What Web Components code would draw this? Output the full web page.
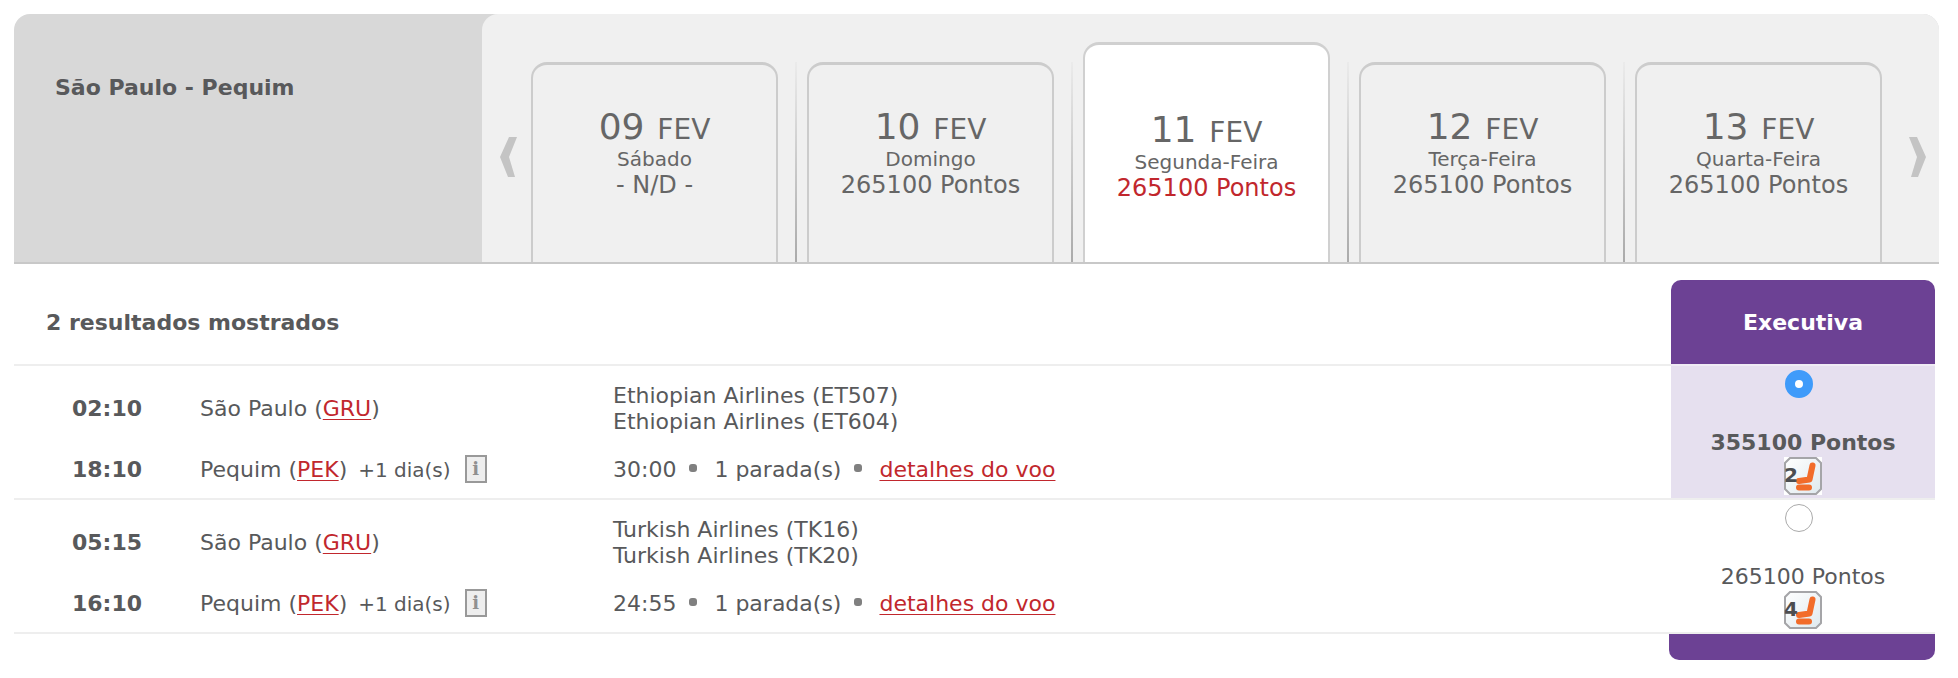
<!DOCTYPE html>
<html lang="pt-BR">
<head>
<meta charset="utf-8">
<title>São Paulo - Pequim</title>
<style>
  body { margin: 0; background: #fff; color: #58595b; font: 22px/26px Verdana, "DejaVu Sans", sans-serif; }
</style>
</head>
<body>
<flight-page></flight-page>
<script>
const define = (name, html, setup) => {
  const tpl = document.createElement('template');
  tpl.innerHTML = html;
  customElements.define(name, class extends HTMLElement {
    constructor() {
      super();
      this.attachShadow({ mode: 'open' }).append(tpl.content.cloneNode(true));
    }
    connectedCallback() { if (setup) setup(this, this.shadowRoot); }
  });
};

define('strip-arrow', `
<style>
  :host { display: flex; }
  button { flex: 1; border: 0; padding: 0; margin: 0; background: none; cursor: pointer; display: flex; align-items: flex-start; padding-top: 122px; justify-content: center; }
  svg { display: block; width: 18px; height: 42px; }
  :host([direction="next"]) svg { transform: scaleX(-1); }
</style>
<button type="button"><svg viewBox="0 0 18 42" aria-hidden="true"><path d="M10 1H18L10 21L16 41H9L1 21Z" fill="#c4c4c4"/></svg></button>`,
(host, root) => root.querySelector('button').setAttribute('aria-label', host.getAttribute('label')));

define('date-tab', `
<style>
  :host { display: flex; position: relative; flex: 1 1 0; min-width: 0; margin-top: 48px; }
  button { flex: 1; min-width: 0; margin: 0; padding: 45px 0 0; border: 2px solid #ccc; border-top-width: 3px; border-bottom: 0; border-radius: 16px 16px 0 0; background: #f0f0f0; color: #666; font: inherit; display: flex; flex-direction: column; align-items: center; cursor: pointer; }
  .date { font-size: 28px; line-height: 34px; white-space: pre; }
  .number { font-size: 36px; margin-right: 4px; }
  .day { font-size: 20px; line-height: 24px; }
  .price { font-size: 24px; line-height: 28px; }
  :host([divided])::before { content: ""; position: absolute; left: -12px; top: 0; bottom: 0; width: 2px; background: linear-gradient(#ebebeb, #aaa); }
  :host([active]) { margin-top: 28px; }
  :host([active]) button { background: #fff; padding-top: 68px; border-color: #d0d0d0; }
  :host([active])::before { top: 20px; }
  :host([active]) .price { color: #c1272d; }
</style>
<button type="button"><span class="date"><span class="number"></span> FEV</span><span class="day"></span><span class="price"><slot></slot></span></button>`,
(host, root) => {
  root.querySelector('.number').textContent = host.getAttribute('number');
  root.querySelector('.day').textContent = host.getAttribute('day');
  if (host.hasAttribute('active')) root.querySelector('button').setAttribute('aria-current', 'date');
});

define('date-strip', `
<style>
  :host { display: flex; height: 250px; box-sizing: border-box; border-bottom: 2px solid #c8c8c8; border-radius: 16px 16px 0 0; background: #d8d8d8; }
  h1 { flex: 0 0 468px; box-sizing: border-box; margin: 0; padding: 61px 0 0 41px; font-size: 22px; line-height: 26px; }
  nav { flex: 1; display: flex; background: #f0f0f0; border-radius: 16px 16px 0 0; }
  .tabs { flex: 1; display: flex; gap: 29px; }
  [direction="prev"] { width: 49px; padding-left: 2px; box-sizing: border-box; }
  [direction="next"] { width: 57px; padding-left: 14px; box-sizing: border-box; }
</style>
<h1><slot name="route"></slot></h1>
<nav aria-label="Datas">
  <strip-arrow direction="prev" label="Datas anteriores"></strip-arrow>
  <div class="tabs"><slot></slot></div>
  <strip-arrow direction="next" label="Próximas datas"></strip-arrow>
</nav>`);

define('info-button', `
<style>
  :host { display: inline-block; vertical-align: middle; }
  button { display: block; box-sizing: border-box; width: 22px; height: 28px; margin: 0; padding: 0; border: 2px solid #999; background: #eee; color: #909090; font: bold 18px/22px "DejaVu Serif", serif; text-align: center; cursor: pointer; }
</style>
<button type="button">i</button>`);

define('seat-count', `
<style>
  :host { display: block; position: relative; width: 38px; height: 38px; margin: 0 auto; background: #fff; text-align: left; font: bold 20px/24px Verdana, "DejaVu Sans", sans-serif; color: #4c4d50; }
  svg { display: block; width: 38px; height: 38px; }
  span { position: absolute; left: 0; top: 6px; }
</style>
<svg viewBox="0 0 38 38" aria-hidden="true">
  <defs><linearGradient id="g" x1="0" y1="0" x2="1" y2="1"><stop offset="0" stop-color="#fff"/><stop offset="1" stop-color="#dfe9ee"/></linearGradient></defs>
  <path d="M6 1H32L37 6V32L32 37H6L1 32V6Z" fill="url(#g)" stroke="#a5a5a8" stroke-width="2"/>
  <path d="M28.500 8.500L25.500 22.500L15 24" fill="none" stroke="#f26c2a" stroke-width="6" stroke-linecap="round" stroke-linejoin="round"/>
  <path d="M15 30.500H25" stroke="#f26c2a" stroke-width="6" stroke-linecap="round"/>
</svg>
<span><slot></slot></span>`);

define('stop-dot', `
<style>:host { display: inline-block; width: 8px; height: 8px; margin: 0 17px 0 13px; border-radius: 3px; background: #808080; vertical-align: 5px; }</style>`);

const flight = (id, f, checked) => `
<tbody class="${checked ? 'chosen' : ''}">
  <tr class="out">
    <th scope="row">${f.dep}</th>
    <td>São Paulo (<a href="#GRU">GRU</a>)</td>
    <td>${f.legs.join('<br>')}</td>
    <td class="fare" rowspan="2">
      <input type="radio" name="fare" id="${id}" ${checked ? 'checked' : ''}>
      <label for="${id}">${f.price} Pontos</label>
      <seat-count>${f.seats}</seat-count>
    </td>
  </tr>
  <tr class="in">
    <th scope="row">${f.arr}</th>
    <td>Pequim (<a href="#PEK">PEK</a>) <small>+1 dia(s)</small><info-button></info-button></td>
    <td>${f.time}<stop-dot></stop-dot>1 parada(s)<stop-dot></stop-dot><a href="#${id}">detalhes do voo</a></td>
  </tr>
</tbody>`;

define('flight-results', `
<style>
  :host { display: block; padding-top: 16px; }
  table { width: 100%; table-layout: fixed; border-collapse: separate; border-spacing: 0; }
  .time { width: 186px; } .city { width: 413px; } .cabin { width: 264px; }
  th, td { padding: 0; text-align: left; font-size: 22px; line-height: 26px; vertical-align: top; }
  thead th { height: 82px; padding-top: 2px; vertical-align: middle; border-bottom: 2px solid #eee; }
  thead th:first-child { padding-left: 32px; }
  thead .cabin-name { background: #6c4194; background-clip: padding-box; border-radius: 10px 10px 0 0; border-color: #efebf4; color: #fff; text-align: center; }
  .out th, .out td { height: 60px; padding-top: 13px; padding-bottom: 3px; vertical-align: middle; }
  tbody th { padding-left: 58px; }
  .in th, .in td { height: 41px; padding-top: 15px; border-bottom: 2px solid #eee; }
  tbody td.fare { box-sizing: border-box; height: 134px; padding: 4px 0 0; vertical-align: top; text-align: center; border-bottom: 2px solid #eee; }
  .chosen .fare { background: #e6e0ef; font-weight: bold; }
  a { color: #c1272d; text-decoration-thickness: 1px; text-underline-offset: 3px; text-decoration-skip-ink: none; }
  small { margin-left: 4px; font-size: 20px; }
  info-button { margin: -4px 0 0 14px; }
  input { appearance: none; box-sizing: border-box; display: block; width: 28px; height: 28px; margin: 0 auto; border: 1px solid #aaa; border-radius: 50%; background: #fff; transform: translateX(-4px); }
  input:checked { border: 10px solid #3f9bfa; }
  label { display: block; padding: 32px 0 1px; }
  .foot { width: 266px; height: 26px; margin-left: auto; border-radius: 0 0 10px 10px; background: #6c4194; }
</style>
<table>
  <colgroup><col class="time"><col class="city"><col><col class="cabin"></colgroup>
  <thead><tr><th colspan="3">2 resultados mostrados</th><th class="cabin-name" scope="col">Executiva</th></tr></thead>
  ${flight('voo-1', { dep: '02:10', arr: '18:10', legs: ['Ethiopian Airlines (ET507)', 'Ethiopian Airlines (ET604)'], time: '30:00', price: '355100', seats: 2 }, true)}
  ${flight('voo-2', { dep: '05:15', arr: '16:10', legs: ['Turkish Airlines (TK16)', 'Turkish Airlines (TK20)'], time: '24:55', price: '265100', seats: 4 }, false)}
</table>
<div class="foot"></div>`);

define('flight-page', `
<style>
  :host { display: block; padding: 14px 19px 18px 14px; }
  flight-results { margin-right: 4px; }
</style>
<date-strip>
  <span slot="route">São Paulo - Pequim</span>
  <date-tab number="09" day="Sábado">- N/D -</date-tab>
  <date-tab divided number="10" day="Domingo">265100 Pontos</date-tab>
  <date-tab divided number="11" day="Segunda-Feira" active>265100 Pontos</date-tab>
  <date-tab divided number="12" day="Terça-Feira">265100 Pontos</date-tab>
  <date-tab divided number="13" day="Quarta-Feira">265100 Pontos</date-tab>
</date-strip>
<flight-results></flight-results>`);
</script>
</body>
</html>
